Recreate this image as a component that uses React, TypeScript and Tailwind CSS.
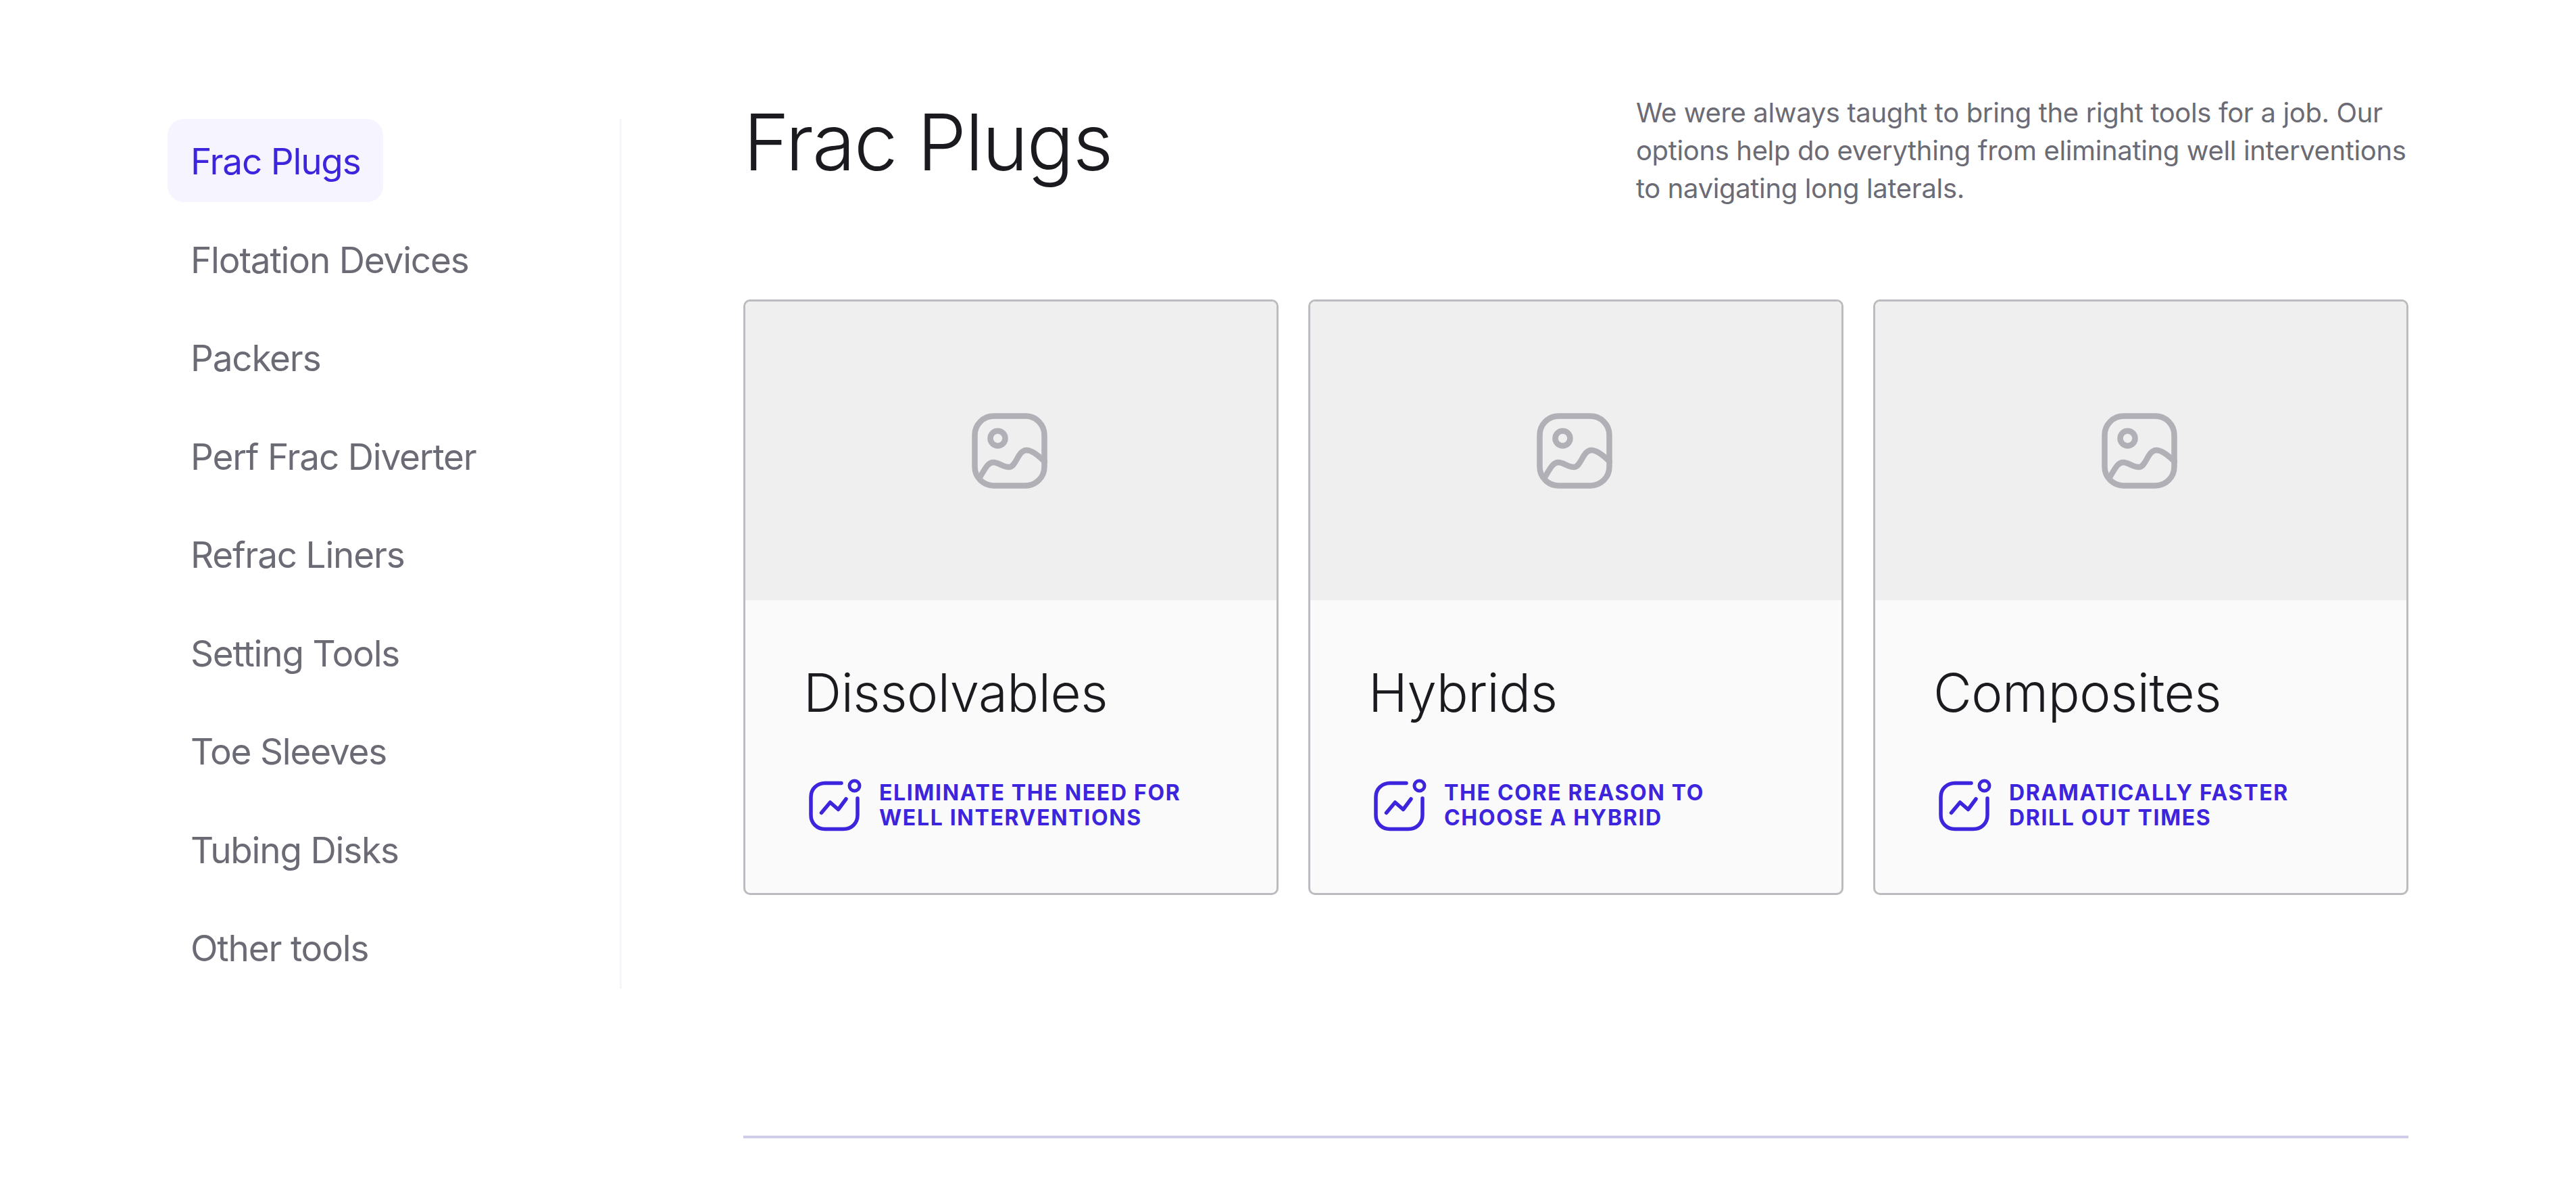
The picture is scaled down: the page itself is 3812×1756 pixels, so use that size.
const navItems = [
  "Frac Plugs",
  "Flotation Devices",
  "Packers",
  "Perf Frac Diverter",
  "Refrac Liners",
  "Setting Tools",
  "Toe Sleeves",
  "Tubing Disks",
  "Other tools",
];

const products = [
  { name: "Dissolvables", lines: ["Eliminate the need for", "well interventions"] },
  { name: "Hybrids", lines: ["The core reason to", "choose a hybrid"] },
  { name: "Composites", lines: ["Dramatically faster", "drill out times"] },
];

function ImageIcon() {
  return (
    <svg width="112" height="112" viewBox="0 0 112 112" fill="none" stroke="#b0b0b6" strokeWidth="8.5" strokeLinecap="round" className="mr-[4px]">
      <rect x="4.5" y="4.5" width="103" height="103" rx="28" />
      <circle cx="38.5" cy="37.5" r="11" />
      <path d="M12 95C20 82 24 73 32 73C40 73 46 80 55 80C66 80 68 55 81 55C90 55 100 64 108 72" />
    </svg>
  );
}

function ChartIcon() {
  return (
    <svg width="78" height="78" viewBox="0 0 78 78" fill="none" stroke="#3c25dc" strokeWidth="5.5" strokeLinecap="round" strokeLinejoin="round" className="shrink-0">
      <path d="M48 6.5H24C12 6.5 3 15 3 27V54C3 66 12 74.5 24 74.5H51C63 74.5 72 66 72 54V29" />
      <path d="M18.5 50.5L31.5 35L43.5 45.5L55 30" />
      <circle cx="67.5" cy="10.5" r="7.5" strokeWidth="5" />
    </svg>
  );
}

export default function App() {
  return (
    <div className="flex h-[1756px] items-start overflow-hidden bg-white pl-[248px] font-['Inter',sans-serif]">
      <aside className="mt-[176px] flex h-[1287px] w-[672px] shrink-0 flex-col items-start gap-[22px] border-r-[3px] border-[#f6f5fd]">
        {navItems.map((item, i) => (
          <a
            key={item}
            className={`flex h-[124px] items-center rounded-[24px] px-[34px] pt-[5px] text-[53px] tracking-[-0.022em] ${
              i === 0 ? "bg-[#f6f5ff] text-[#3c25dc]" : "text-[#6b6b75]"
            }`}
          >
            {item}
          </a>
        ))}
      </aside>

      <main className="ml-[180px] w-[2464px] shrink-0 pt-[139px]">
        <div className="flex h-[304px] items-start justify-between">
          <h1 className="mt-px text-[116px] leading-[140px] font-light tracking-[-0.017em] text-[#1a1a1f]">Frac Plugs</h1>
          <p className="w-[1143px] text-[40px] leading-[56px] tracking-[-0.36px] text-[#6b6b75]">
            We were always taught to bring the right tools for a job. Our options help do everything from eliminating well interventions to navigating long laterals.
          </p>
        </div>

        <div className="grid grid-cols-3 gap-[44px]">
          {products.map((p) => (
            <div key={p.name} className="overflow-hidden rounded-[10px] border-[3px] border-[#bbbbc0] bg-[#fafafb]">
              <div className="flex h-[442px] items-center justify-center bg-[#efeff0]">
                <ImageIcon />
              </div>
              <div className="h-[433px] pt-[90px] pl-[86px]">
                <h2 className="text-[78px] leading-[94px] font-light tracking-[-0.006em] text-[#1a1a1f]">{p.name}</h2>
                <div className="mt-[80px] ml-[8px] flex items-center gap-[26px]">
                  <ChartIcon />
                  <div className="text-[32px] leading-[37px] font-bold tracking-[0.052em] text-[#3c25dc] uppercase">
                    {p.lines.map((l) => (
                      <div key={l}>{l}</div>
                    ))}
                  </div>
                </div>
              </div>
            </div>
          ))}
        </div>

        <div className="mt-[356px] h-[4px] bg-[#cfcde8]" />
      </main>
    </div>
  );
}
